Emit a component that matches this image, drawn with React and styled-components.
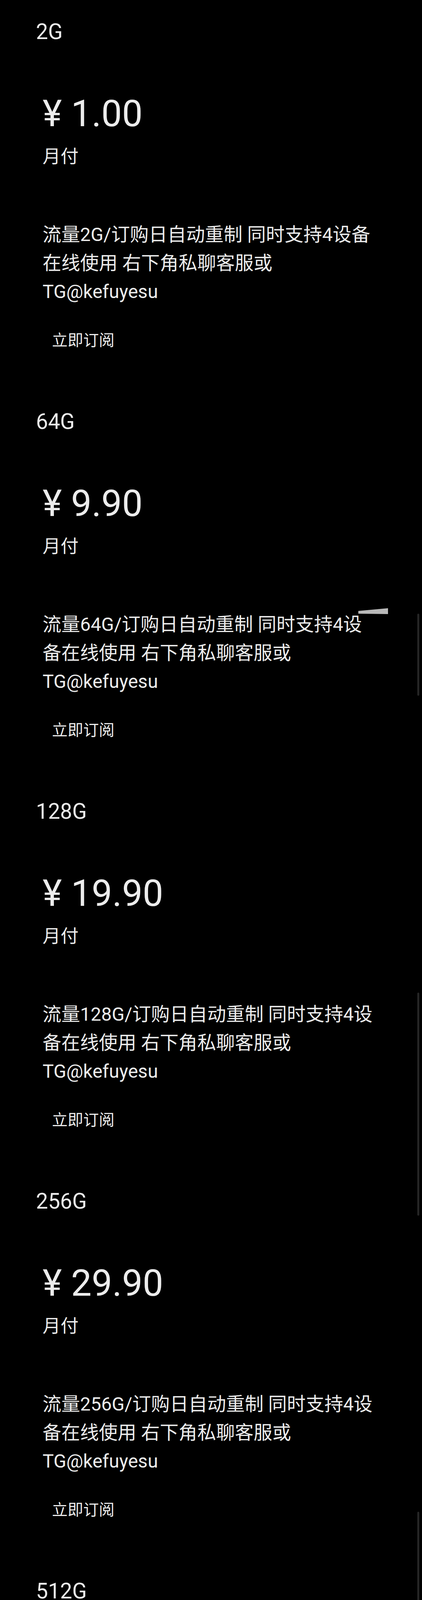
import React from 'react';
import styled, { createGlobalStyle } from 'styled-components';

const plans = [
  { id: 1, name: '2G', price: '1.00' },
  { id: 2, name: '64G', price: '9.90' },
  { id: 3, name: '128G', price: '19.90' },
  { id: 4, name: '256G', price: '29.90' },
  { id: 5, name: '512G', price: '39.90' },
  { id: 6, name: '1024G', price: '59.90' },
];

// leftover scroll thumbs from the stitched screenshot
const thumbs = [
  { top: 1571, height: 210 },
  { top: 2541, height: 571 },
  { top: 3870, height: 372 },
  { top: 5198, height: 438 },
];

const App = () => (
  <>
    <GlobalStyle />
    <Page>
      {plans.map(({ id, name, price }) => (
        <Plan key={id}>
          <PlanName>{name}</PlanName>
          <PlanBody>
            <Price>¥ {price}</Price>
            <Period>月付</Period>
            <Description>
              流量{name}/订购日自动重制 同时支持4设备在线使用 右下角私聊客服或TG@kefuyesu
            </Description>
            <SubscribeButton type="button">立即订阅</SubscribeButton>
          </PlanBody>
        </Plan>
      ))}

      {thumbs.map(({ top, height }) => (
        <ScrollThumb key={top} style={{ top, height }} />
      ))}

      <Glint viewBox="0 0 76 15" width="76" height="15">
        <polygon points="0,7 76,0 76,15 0,14" fill="#b9b9b9" />
      </Glint>
    </Page>
  </>
);

const GlobalStyle = createGlobalStyle`
  html, body {
    margin: 0;
    padding: 0;
    background: #000;
  }

  body {
    font-family: Roboto, "Noto Sans CJK SC", sans-serif;
    color: #ececec;
  }
`;

const Page = styled.div`
  position: relative;
  width: 1080px;
  background: #000;
`;

const Plan = styled.section`
  display: flex;
  flex-direction: column;
  height: 998px;
  box-sizing: border-box;
  padding: 49px 0 0 92px;
`;

const PlanName = styled.h3`
  margin: 0;
  font-size: 55px;
  font-weight: 400;
  line-height: 64px;
`;

const PlanBody = styled.div`
  display: flex;
  flex-direction: column;
  align-items: flex-start;
  padding-left: 17px;
  width: 852px;
`;

const Price = styled.div`
  margin-top: 123px;
  font-size: 94px;
  line-height: 110px;
`;

const Period = styled.div`
  margin-top: 24px;
  font-size: 46px;
  line-height: 60px;
`;

const Description = styled.p`
  margin: 134px 0 0;
  font-size: 48px;
  line-height: 73px;
`;

const SubscribeButton = styled.button`
  margin-top: 59px;
  padding: 0 24px;
  border: none;
  background: transparent;
  color: #ececec;
  font-family: inherit;
  font-size: 40px;
  line-height: 60px;
`;

const ScrollThumb = styled.div`
  position: absolute;
  right: 7px;
  width: 5px;
  border-radius: 3px;
  background: #262626;
`;

const Glint = styled.svg`
  position: absolute;
  left: 917px;
  top: 1557px;
  display: block;
`;

export default App;
